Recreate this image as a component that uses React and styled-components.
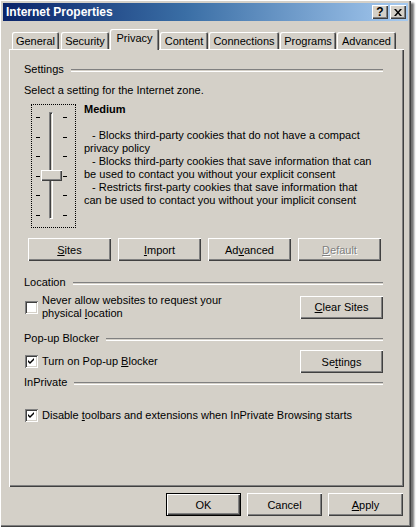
import React from 'react';
import styled, { createGlobalStyle, css } from 'styled-components';

const Global = createGlobalStyle`
  html, body {
    margin: 0;
    background: #ffffff;
  }
  body {
    font-family: "Liberation Sans", Arial, sans-serif;
    font-size: 11px;
    color: #000;
  }
`;

const FACE = '#d4d0c8';

const raised = css`
  box-shadow: inset 1px 1px #ffffff, inset -1px -1px #404040, inset -2px -2px #808080;
`;

const Window = styled.div`
  width: 411px;
  height: 527px;
  box-sizing: border-box;
  background: ${FACE};
  padding: 3px;
  display: flex;
  flex-direction: column;
  box-shadow: inset 1px 1px #ffffff, inset -1px -1px #404040, inset -2px -2px #808080,
    3px 3px 2px rgba(0, 0, 0, 0.55);
`;

const TitleBar = styled.div`
  height: 18px;
  flex-shrink: 0;
  display: flex;
  align-items: center;
  padding: 0 2px 0 3px;
  background: linear-gradient(to right, #0a246a 0%, #3a6ea5 45%, #a6caf0 100%);
`;

const Title = styled.span`
  flex: 1;
  color: #fff;
  font-weight: bold;
  font-size: 12px;
  white-space: nowrap;
`;

const CaptionButton = styled.div`
  width: 16px;
  height: 14px;
  background: ${FACE};
  ${raised};
  display: flex;
  align-items: center;
  justify-content: center;
  font-weight: bold;
  font-size: 12px;
  line-height: 14px;
  margin-left: ${(p) => (p.$gap ? '2px' : '0')};
`;

const Tabs = styled.div`
  display: flex;
  align-items: flex-end;
  padding: 8px 0 0 0;
  height: 28px;
  box-sizing: border-box;
  position: relative;
  z-index: 1;
`;

const Tab = styled.div`
  width: ${(p) => p.$w}px;
  height: ${(p) => (p.$active ? '21px' : '17px')};
  margin-bottom: ${(p) => (p.$active ? '-1px' : '0')};
  margin-left: ${(p) => p.$ml}px;
  box-sizing: border-box;
  background: ${FACE};
  border-radius: 2px 2px 0 0;
  box-shadow: inset 1px 1px #ffffff, inset -1px 0 #404040, inset -2px 0 #808080;
  display: flex;
  justify-content: center;
  align-items: ${(p) => (p.$active ? 'flex-start' : 'center')};
  padding-top: ${(p) => (p.$active ? '3px' : '1px')};
  white-space: nowrap;
  font-size: 11px;
`;

const Panel = styled.div`
  margin: 0 4px 0 6px;
  height: 438px;
  box-sizing: border-box;
  padding: 14px 21px 0 15px;
  display: flex;
  flex-direction: column;
  box-shadow: inset 1px 1px #ffffff, inset -1px -1px #404040, inset -2px -2px #808080;
`;

const GroupHead = styled.div`
  display: flex;
  align-items: center;
  height: 13px;
  line-height: 13px;
  margin-top: ${(p) => p.$top || 0}px;
  white-space: nowrap;
  &::after {
    content: '';
    flex: 1;
    margin-left: 7px;
    margin-top: 1px;
    height: 1px;
    border-top: 1px solid #808080;
    border-bottom: 1px solid #ffffff;
  }
`;

const Line = styled.div`
  line-height: 13px;
  margin-top: ${(p) => p.$top || 0}px;
  white-space: nowrap;
`;

const SliderRow = styled.div`
  display: flex;
  margin-top: 7px;
  height: 125px;
`;

const SliderFrame = styled.div`
  position: relative;
  margin-left: 7px;
  width: 45px;
  height: 124px;
  box-sizing: border-box;
  border: 1px dotted #000;
  display: flex;
  padding-left: 4px;
`;

const TickColumn = styled.div`
  width: 4px;
  margin-top: 12px;
  height: 99px;
  display: flex;
  flex-direction: column;
  justify-content: space-between;
  margin-left: ${(p) => p.$left}px;
`;

const Tick = styled.div`
  height: 1px;
  background: #000;
`;

const Track = styled.div`
  width: 4px;
  height: 107px;
  margin: 7px 0 0 9px;
  box-sizing: border-box;
  border-left: 1px solid #808080;
  border-top: 1px solid #808080;
  border-right: 1px solid #ffffff;
  border-bottom: 1px solid #ffffff;
  box-shadow: inset 1px 1px #404040;
`;

const Thumb = styled.div`
  position: absolute;
  left: 9px;
  top: 65px;
  width: 21px;
  height: 11px;
  background: ${FACE};
  ${raised};
`;

const Description = styled.div`
  margin-left: 8px;
`;

const Level = styled.div`
  font-weight: bold;
  line-height: 13px;
  margin-top: -1px;
  margin-bottom: 13px;
`;

const DescLine = styled.div`
  line-height: 13px;
  white-space: nowrap;
  padding-left: ${(p) => (p.$indent ? '8px' : '0')};
`;

const ButtonRow = styled.div`
  display: flex;
  gap: 7px;
  margin: 9px 0 0 4px;
`;

const Button = styled.div`
  width: ${(p) => p.$w || 83}px;
  height: 23px;
  box-sizing: border-box;
  background: ${FACE};
  ${raised};
  display: flex;
  align-items: center;
  justify-content: center;
  white-space: nowrap;
  color: ${(p) => (p.$disabled ? '#808080' : '#000')};
  text-shadow: ${(p) => (p.$disabled ? '1px 1px #ffffff' : 'none')};
  ${(p) =>
    p.$default &&
    css`
      border: 1px solid #000;
    `}
`;

const OptionRow = styled.div`
  display: flex;
  align-items: center;
  justify-content: space-between;
  margin-top: ${(p) => p.$top}px;
`;

const CheckLabel = styled.div`
  display: flex;
  align-items: center;
  margin-left: 1px;
  line-height: 13px;
`;

const Box = styled.div`
  width: 13px;
  height: 13px;
  flex-shrink: 0;
  box-sizing: border-box;
  background: #fff;
  box-shadow: inset 1px 1px #808080, inset -1px -1px #ffffff, inset 2px 2px #404040,
    inset -2px -2px #d4d0c8;
  display: flex;
  align-items: center;
  justify-content: center;
  margin-right: 4px;
`;

const Footer = styled.div`
  display: flex;
  justify-content: flex-end;
  gap: 6px;
  padding: 6px 5px 0 0;
`;

const U = styled.span`
  text-decoration: underline;
  text-underline-offset: 1px;
`;

function Check({ on }) {
  return (
    <Box>
      {on && (
        <svg width="7" height="7" viewBox="0 0 7 7">
          <path d="M0 2 L2 4 L6 0 L6 2 L2 6 L0 4 Z" fill="#000" />
        </svg>
      )}
    </Box>
  );
}

// [label, start x, end x] measured along the tab strip
const tabs = [
  ['General', 12, 59],
  ['Security', 61, 109],
  ['Privacy', 110, 159],
  ['Content', 160, 208],
  ['Connections', 209, 279],
  ['Programs', 280, 336],
  ['Advanced', 337, 396],
];

export default function App() {
  return (
    <>
      <Global />
      <Window>
        <TitleBar>
          <Title>Internet Properties</Title>
          <CaptionButton>?</CaptionButton>
          <CaptionButton $gap>
            <svg width="8" height="7" viewBox="0 0 8 7">
              <path d="M0 0 L2 0 L4 2.5 L6 0 L8 0 L5 3.5 L8 7 L6 7 L4 4.5 L2 7 L0 7 L3 3.5 Z" fill="#000" />
            </svg>
          </CaptionButton>
        </TitleBar>

        <Tabs>
          {tabs.map(([name, x0, x1], i) => (
            <Tab
              key={name}
              $active={name === 'Privacy'}
              $w={x1 - x0}
              $ml={i === 0 ? x0 - 3 : x0 - tabs[i - 1][2]}
            >
              {name}
            </Tab>
          ))}
        </Tabs>

        <Panel>
          <GroupHead>Settings</GroupHead>
          <Line $top={8}>Select a setting for the Internet zone.</Line>
          <SliderRow>
            <SliderFrame>
              <TickColumn $left={0}>
                {[0, 1, 2, 3, 4, 5].map((t) => (
                  <Tick key={t} />
                ))}
              </TickColumn>
              <Track />
              <TickColumn $left={10}>
                {[0, 1, 2, 3, 4, 5].map((t) => (
                  <Tick key={t} />
                ))}
              </TickColumn>
              <Thumb />
            </SliderFrame>
            <Description>
              <Level>Medium</Level>
              <DescLine $indent>- Blocks third-party cookies that do not have a compact</DescLine>
              <DescLine>privacy policy</DescLine>
              <DescLine $indent>- Blocks third-party cookies that save information that can</DescLine>
              <DescLine>be used to contact you without your explicit consent</DescLine>
              <DescLine $indent>- Restricts first-party cookies that save information that</DescLine>
              <DescLine>can be used to contact you without your implicit consent</DescLine>
            </Description>
          </SliderRow>

          <ButtonRow>
            <Button><U>S</U>ites</Button>
            <Button><U>I</U>mport</Button>
            <Button>Ad<U>v</U>anced</Button>
            <Button $disabled><U>D</U>efault</Button>
          </ButtonRow>

          <GroupHead $top={15}>Location</GroupHead>
          <OptionRow $top={5}>
            <CheckLabel>
              <Check />
              <div>
                Never allow websites to request your
                <br />
                physical <U>l</U>ocation
              </div>
            </CheckLabel>
            <Button><U>C</U>lear Sites</Button>
          </OptionRow>

          <GroupHead $top={12}>Pop-up Blocker</GroupHead>
          <OptionRow $top={5}>
            <CheckLabel>
              <Check on />
              <span>Turn on Pop-up <U>B</U>locker</span>
            </CheckLabel>
            <Button>Se<U>t</U>tings</Button>
          </OptionRow>

          <GroupHead $top={3}>InPrivate</GroupHead>
          <OptionRow $top={20}>
            <CheckLabel>
              <Check on />
              <span>Disable <U>t</U>oolbars and extensions when InPrivate Browsing starts</span>
            </CheckLabel>
          </OptionRow>
        </Panel>

        <Footer>
          <Button $w={75} $default>OK</Button>
          <Button $w={75}>Cancel</Button>
          <Button $w={75}><U>A</U>pply</Button>
        </Footer>
      </Window>
    </>
  );
}
